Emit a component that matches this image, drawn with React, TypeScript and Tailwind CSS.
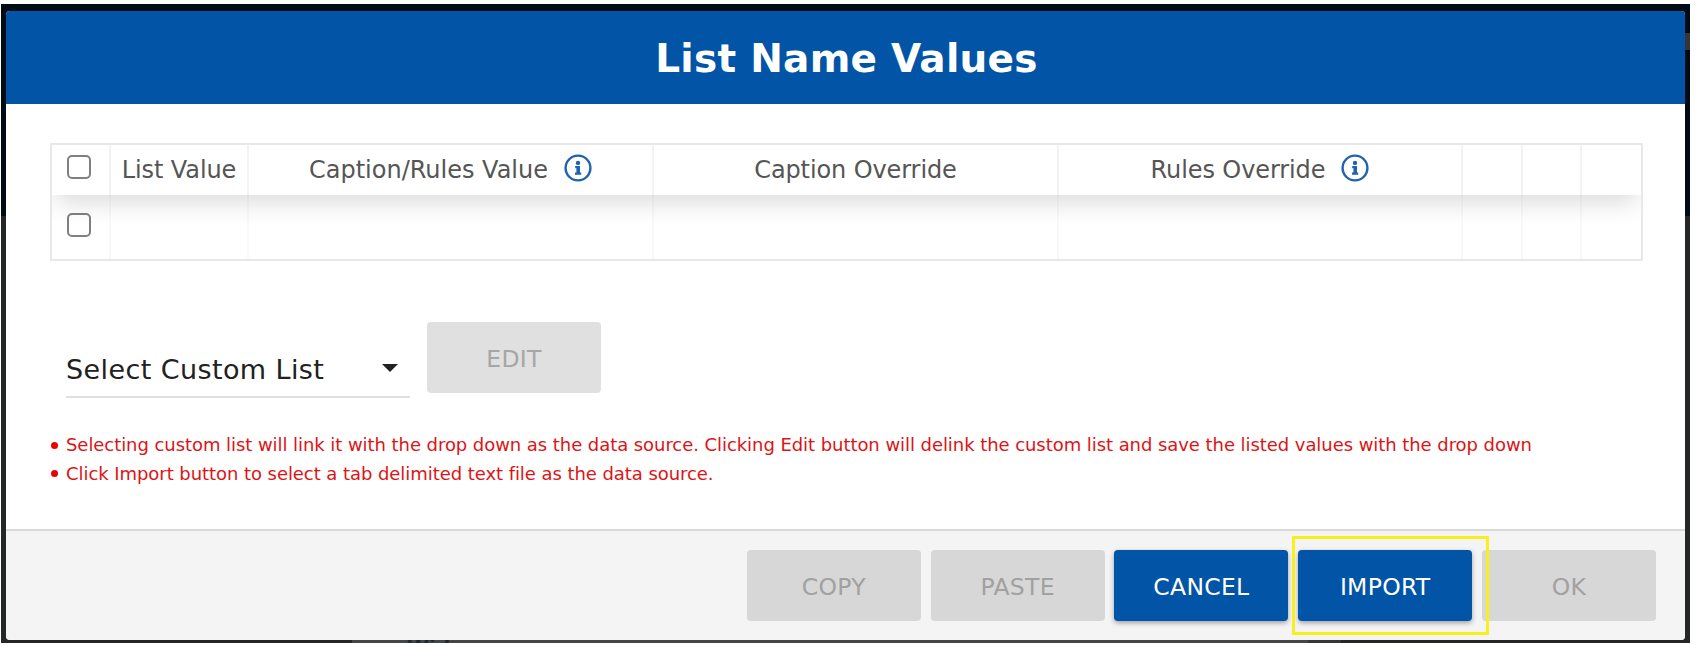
import type { ReactNode } from "react";

function InfoIcon() {
  return (
    <svg className="mb-[3px] h-7 w-7 shrink-0" viewBox="0 0 28 28" fill="none">
      <circle cx="14" cy="14" r="12.4" stroke="#1e62b0" strokeWidth="2.4" />
      <circle cx="14" cy="8.9" r="2.2" fill="#1e62b0" />
      <path d="M11.2 12H16V18.4H17.2V20.8H11V18.4H12.4V14.2H11.2Z" fill="#1e62b0" />
    </svg>
  );
}

function Checkbox() {
  return <span className="block h-6 w-6 rounded-[5px] border-2 border-[#808080] bg-white" />;
}

const columns = "grid grid-cols-[59px_138px_405px_405px_404px_60px_59px_1fr]";

function HeadCell({ children, className = "" }: { children?: ReactNode; className?: string }) {
  return (
    <div className={`flex items-center justify-center border-r-2 border-[#f3f3f3] last:border-r-0 whitespace-nowrap ${className}`}>
      {children}
    </div>
  );
}

function BodyCell({ children, className = "" }: { children?: ReactNode; className?: string }) {
  return (
    <div className={`flex items-center justify-center border-r-2 border-[#f9f9f9] last:border-r-0 ${className}`}>
      {children}
    </div>
  );
}

function Button({ label, kind }: { label: string; kind: "primary" | "disabled" | "edit" }) {
  const look = {
    primary: "bg-[#0254a6] text-white shadow-[0_2px_5px_rgba(0,0,0,0.35)]",
    disabled: "bg-[#d7d7d7] text-[#a1a1a1]",
    edit: "bg-[#e0e0e0] text-[#a6a6a6]",
  }[kind];
  return (
    <button className={`h-[71px] w-[174px] shrink-0 rounded pt-[3px] text-[23.5px] leading-[68px] tracking-[0.3px] ${look}`}>{label}</button>
  );
}

export default function App() {
  return (
    <div className="h-[645px] w-[1698px] overflow-hidden bg-white pt-1 pl-px font-['DejaVu_Sans',sans-serif]">
      <div className="relative h-[639px] w-[1689px] overflow-hidden bg-[linear-gradient(#000b15_212px,#242628_212px)] pt-[7px] pl-[5px]">
        <div className="absolute top-[29px] right-0 h-[17px] w-2 bg-[#353535]" />
        <div className="absolute bottom-0 left-[351px] h-[5px] w-[956px] bg-[#454545]" />
        <div className="absolute bottom-0 left-[1307px] h-[5px] w-[33px] bg-[#353535]" />
        <div className="absolute bottom-[-14px] left-[406px] text-[20px] leading-5 font-bold text-[#132a3c]">Wider</div>

        <div className="relative flex h-[629px] w-[1679px] flex-col overflow-hidden rounded bg-white">
          <header className="flex h-[92.5px] shrink-0 items-center justify-center bg-[#0254a6] pt-1 pl-0.5 text-[39px] font-bold tracking-[0.25px] whitespace-nowrap text-white">
            <h1>List Name Values</h1>
          </header>

          <main className="flex flex-1 flex-col pt-[39.5px] pl-11">
            <div className="h-[118px] w-[1593px] overflow-hidden border-2 border-[#e8e8e8] text-[24px] text-[#555]">
              <div className={`${columns} relative h-[49.5px] bg-white shadow-[0_12px_24px_-4px_rgba(0,0,0,0.14)]`}>
                <HeadCell className="pr-[3px] pb-[5px]"><Checkbox /></HeadCell>
                <HeadCell><span className="tracking-[-0.1px]">List Value</span></HeadCell>
                <HeadCell className="gap-4"><span>Caption/Rules Value</span><InfoIcon /></HeadCell>
                <HeadCell><span className="tracking-[-0.1px]">Caption Override</span></HeadCell>
                <HeadCell className="gap-4"><span className="tracking-[-0.1px]">Rules Override</span><InfoIcon /></HeadCell>
                <HeadCell />
                <HeadCell />
                <HeadCell />
              </div>
              <div className={`${columns} h-[64.5px]`}>
                <BodyCell className="pr-[3px] pb-1"><Checkbox /></BodyCell>
                <BodyCell />
                <BodyCell />
                <BodyCell />
                <BodyCell />
                <BodyCell />
                <BodyCell />
                <BodyCell />
              </div>
            </div>

            <div className="mt-[61px] flex pl-4">
              <div className="mt-[30px] flex h-[46px] w-[344px] items-center justify-between border-b-2 border-[#e0e0e0] pr-3 pb-2 text-[27px] tracking-[0.4px] whitespace-nowrap text-[#212121]">
                <span>Select Custom List</span>
                <svg className="mb-1 h-2 w-4" viewBox="0 0 16 8"><path d="M0 0H16L8 8Z" fill="#212121" /></svg>
              </div>
              <div className="ml-[17px]"><Button label="EDIT" kind="edit" /></div>
            </div>

            <ul className="mt-[33px] text-[18px] leading-[28.5px] tracking-[-0.06px] whitespace-nowrap text-[#dc1414]">
              <li className="flex items-center">
                <span className="mr-2 ml-px h-[7px] w-[7px] rounded-full bg-[#ee0000]" />
                <span>Selecting custom list will link it with the drop down as the data source. Clicking Edit button will delink the custom list and save the listed values with the drop down</span>
              </li>
              <li className="flex items-center">
                <span className="mr-2 ml-px h-[7px] w-[7px] rounded-full bg-[#ee0000]" />
                <span>Click Import button to select a tab delimited text file as the data source.</span>
              </li>
            </ul>
          </main>

          <footer className="flex h-[111px] shrink-0 justify-end gap-[9.8px] border-t-2 border-[#dadada] bg-[#f4f4f4] pt-[19px] pr-[29px]">
            <Button label="COPY" kind="disabled" />
            <Button label="PASTE" kind="disabled" />
            <Button label="CANCEL" kind="primary" />
            <div className="relative">
              <Button label="IMPORT" kind="primary" />
              <span className="absolute -top-[14px] -left-[6px] h-[99px] w-[197px] border-3 border-[#f9ef1c]" />
            </div>
            <Button label="OK" kind="disabled" />
          </footer>
        </div>
      </div>
    </div>
  );
}
